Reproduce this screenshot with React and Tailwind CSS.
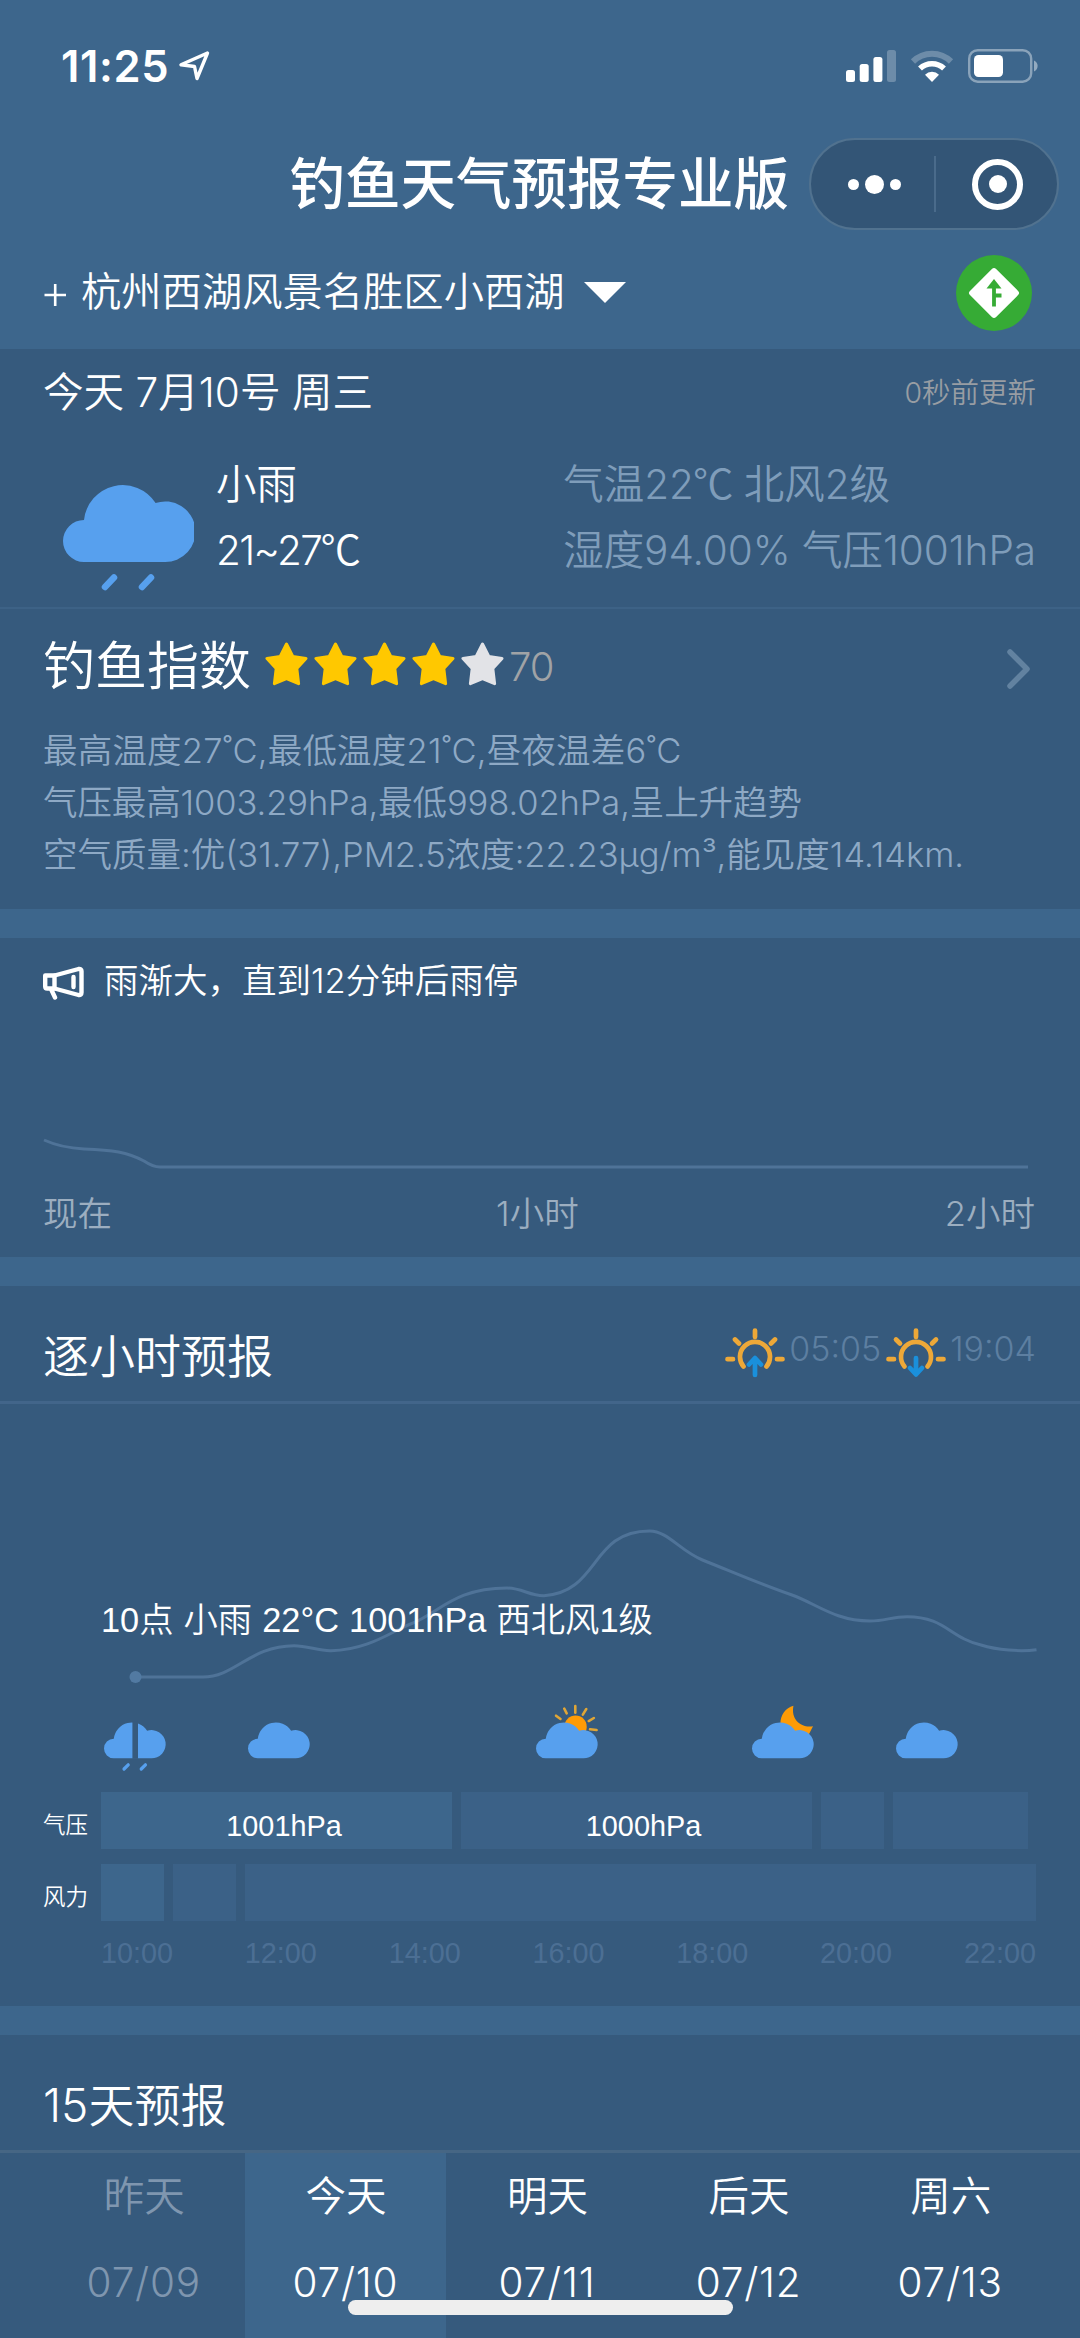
import React from 'react';

const days = [
  { name: '昨天', date: '07/09', past: true },
  { name: '今天', date: '07/10', active: true },
  { name: '明天', date: '07/11' },
  { name: '后天', date: '07/12' },
  { name: '周六', date: '07/13' },
];

const hours = ['10:00', '12:00', '14:00', '16:00', '18:00', '20:00', '22:00'];

const CLOUD = 'M21 78A21 21 0 0 1 21 36A39 39 0 0 1 92.6 19A30.3 30.3 0 1 1 101 78Z';

const StatusBar = () => (
  <div className="h-[132px] flex items-center pl-[61px] pr-[42px]">
    <span className="text-[43.5px] leading-none font-semibold tracking-[0.6px] mt-[1px]">11:25</span>
    <svg className="ml-[9px] w-[32px] h-[30px]" viewBox="0 0 32 30" fill="none" stroke="#fff" strokeWidth="3.4" strokeLinejoin="round">
      <path d="M29.500 2L3 13.800L16.500 15.500L19 27.500Z" />
    </svg>
    <div className="ml-auto flex items-center gap-[14px]">
      <svg width="50" height="32" viewBox="0 0 50 32" fill="#fff">
        <rect x="0" y="20" width="9" height="12" rx="2.500" />
        <rect x="13.700" y="14" width="9" height="18" rx="2.500" />
        <rect x="27.400" y="7" width="9" height="25" rx="2.500" />
        <rect x="41" y="0" width="9" height="32" rx="2.500" opacity="0.25" />
      </svg>
      <svg width="44" height="32" viewBox="0 0 44 32" fill="none" stroke="#fff">
        <path d="M3 11.500A27 27 0 0 1 41 11.500" strokeWidth="6" opacity="0.25" />
        <path d="M10 18.500A17.500 17.500 0 0 1 34 18.500" strokeWidth="5.600" />
        <path d="M22 32L15 24.700A10 10 0 0 1 29 24.700Z" fill="#fff" stroke="none" />
      </svg>
      <svg width="70" height="34" viewBox="0 0 70 34">
        <rect x="1.200" y="1.200" width="62" height="31.500" rx="8.500" fill="none" stroke="#fff" strokeWidth="2.400" opacity="0.4" />
        <rect x="6" y="6" width="29" height="22" rx="4.500" fill="#fff" />
        <path d="M66 11.500A6 6 0 0 1 66 22.500Z" fill="#fff" opacity="0.45" />
      </svg>
    </div>
  </div>
);

const TitleBar = () => (
  <div className="h-[104px] flex items-center justify-end pr-[21px]">
    <h1 className="text-[55.5px] leading-none font-medium mr-[20px] whitespace-nowrap">钓鱼天气预报专业版</h1>
    <div className="w-[250px] h-[92px] rounded-full bg-[#335576] border-2 border-[#51728f] flex items-center">
      <div className="flex-1 flex items-center justify-center gap-[6px] pl-[4px]">
        <i className="size-[11px] rounded-full bg-white" />
        <i className="size-[19px] rounded-full bg-white" />
        <i className="size-[11px] rounded-full bg-white" />
      </div>
      <div className="w-[2px] h-[56px] bg-[#4a6b8b]" />
      <div className="flex-1 flex items-center justify-center pl-[2px]">
        <div className="size-[51px] rounded-full border-[6px] border-white flex items-center justify-center">
          <i className="size-[18px] rounded-full bg-white" />
        </div>
      </div>
    </div>
  </div>
);

const CityBar = () => (
  <div className="h-[113px] flex items-center pl-[44px] pr-[48px]">
    <svg className="mt-[5px]" width="23" height="22" viewBox="0 0 23 22" stroke="#fff" strokeWidth="2.600">
      <path d="M0.500 11H22M11.200 0V22" />
    </svg>
    <span className="ml-[14px] text-[40.3px] leading-none">杭州西湖风景名胜区小西湖</span>
    <svg className="ml-[19px]" width="42" height="21" viewBox="0 0 42 21" fill="#fff">
      <path d="M0 0H42L21 21Z" />
    </svg>
    <svg className="ml-auto" width="76" height="76" viewBox="0 0 76 76">
      <circle cx="38" cy="38" r="38" fill="#36ab35" />
      <rect x="19.500" y="19.500" width="37" height="37" rx="3" fill="#fff" transform="rotate(45 38 38)" />
      <path d="M38 51.500V31M38 40.500H45.500" fill="none" stroke="#36ab35" strokeWidth="3.800" />
      <path d="M38 24L45.500 33.500H30.500Z" fill="#36ab35" />
    </svg>
  </div>
);

const Star = ({ color }) => (
  <svg width="43" height="44" viewBox="0 0 43 44">
    <path
      d="M21.500 2L27.800 14.500L41 16.400L31.800 26.500L33.600 41.700L21.500 36.500L9.400 41.700L11.200 26.500L2 16.400L15.200 14.500Z"
      fill={color}
      stroke={color}
      strokeWidth="3"
      strokeLinejoin="round"
    />
  </svg>
);

// full-width celsius sign, taken from the CJK face
const Celsius = () => <span className="font-['Noto_Sans_CJK_SC',sans-serif] leading-none -ml-[1px] -mr-[1px]">℃</span>;

const Today = () => (
  <section className="bg-[#365a7d]">
    <div className="h-[260px] pl-[43px] pr-[44px] border-b-2 border-[#3d6286]">
      <div className="h-[86px] flex items-center justify-between pt-[2px]">
        <span className="text-[40.6px] leading-none">今天 7月10号 周三</span>
        <span className="text-[28.5px] leading-none text-[#989da3]">0秒前更新</span>
      </div>
      <div className="flex pt-[17px] leading-[66px] text-[40.5px]">
        <svg className="ml-[20px] mt-[32px]" width="131" height="107" viewBox="0 0 131 107">
          <path d={CLOUD} fill="#57a0ee" />
          <path d="M51 93.500L42 103M88 93.500L79 103" stroke="#57a0ee" strokeWidth="6.500" strokeLinecap="round" />
        </svg>
        <div className="ml-[22px]">
          <p>小雨</p>
          <p className="tracking-[-1.6px]">21~27<Celsius /></p>
        </div>
        <div className="ml-auto text-[#7f9dba] whitespace-nowrap">
          <p>气温22<Celsius /> 北风2级</p>
          <p className="tracking-[-0.05px]">湿度94.00% 气压1001hPa</p>
        </div>
      </div>
    </div>
    <div className="h-[300px] pl-[43px] pr-[44px]">
      <div className="h-[116px] flex items-center">
        <h2 className="text-[52px] leading-none">钓鱼指数</h2>
        <div className="flex gap-[6px] ml-[14px] mb-[7px]">
          <Star color="#ffc800" />
          <Star color="#ffc800" />
          <Star color="#ffc800" />
          <Star color="#ffc800" />
          <Star color="#e2e3e7" />
        </div>
        <span className="text-[40px] leading-none text-[#a0a3a6] ml-[5px] tracking-[-1px]">70</span>
        <svg className="ml-auto mr-[5px] mt-[3px]" width="25" height="42" viewBox="0 0 25 42" fill="none" stroke="#6282a0" strokeWidth="5.500" strokeLinecap="round" strokeLinejoin="round">
          <path d="M4 4L21 21L4 38" />
        </svg>
      </div>
      <div className="text-[34.5px] leading-[51.8px] text-[#8ea9c5] whitespace-nowrap">
        <p className="tracking-[0.2px]">最高温度27˚C,最低温度21˚C,昼夜温差6˚C</p>
        <p className="tracking-[-0.1px]">气压最高1003.29hPa,最低998.02hPa,呈上升趋势</p>
        <p>空气质量:优(31.77),PM2.5浓度:22.23μg/m³,能见度14.14km.</p>
      </div>
    </div>
  </section>
);

const RainTrend = () => (
  <section className="h-[319px] mt-[29px] bg-[#365a7d] pl-[43px] pr-[45px] flex flex-col">
    <div className="h-[86px] flex items-center">
      <svg className="mt-[4px]" width="42" height="34" viewBox="0 0 42 34" fill="none" stroke="#fff" strokeWidth="4.400" strokeLinejoin="round" strokeLinecap="round">
        <path d="M2.200 9.500H11.500V22.500H4.200Q2.200 22.500 2.200 20.500Z" />
        <path d="M11.500 9.500L35.500 3Q38.500 2.500 38.500 5V26.500Q38.500 29.500 35.500 29L11.500 22.500" />
        <path d="M30.500 11V21M8.500 24L12 31.500" />
      </svg>
      <span className="ml-[19px] text-[34.5px] leading-none">雨渐大，直到12分钟后雨停</span>
    </div>
    <svg className="mt-[106px]" width="992" height="46" viewBox="0 0 992 46" fill="none" stroke="#4f7398" strokeWidth="3">
      <path d="M1 10C12 15 22 18 41 19C70 20 84 22 101 31C107 35 111 37 117 37H985" />
    </svg>
    <div className="flex justify-between text-[34.5px] leading-[76px] text-[#9caec0]">
      <span>现在</span>
      <span className="ml-[18px]">1小时</span>
      <span>2小时</span>
    </div>
  </section>
);

const SunIcon = ({ down }) => (
  <svg width="60" height="50" viewBox="0 0 60 50" fill="none" strokeLinecap="round" strokeLinejoin="round" strokeWidth="4.700">
    <path d="M18.500 38.500A15 15 0 1 1 41.500 38.500M30 2.500V9M10 11.500L14 15.500M50 11.500L46 15.500M2.500 31.200H8M52 31.200H57.500" stroke="#eda838" />
    {down ? (
      <path d="M30 30V46M24 40L30 46.500L36 40" stroke="#1a90dc" />
    ) : (
      <path d="M30 47V30.500M24 36.500L30 30L36 36.500" stroke="#1a90dc" />
    )}
  </svg>
);

const HourIcon = ({ type }) => (
  <svg className="overflow-visible shrink-0" width="61" height="50" viewBox="0 0 131 107.400">
    {type === 'sun' && (
      <g>
        <circle cx="85" cy="10" r="24" fill="#fe9b06" />
        <path
          d="M43 -13.600L52.600 -6.400M60.700 -28.600L65.900 -18.600M84.400 -34.300V-20M108 -27.900L100.600 -15.700M124.300 -8.600L113.200 -2.100M130.200 17.200L116 15.700"
          stroke="#e0a636"
          strokeWidth="5.500"
          strokeLinecap="round"
        />
      </g>
    )}
    {type === 'moon' && <path d="M89 -35C72 -30 61 -16 61 4L95 30L122 27L131 9C106 13 83 -4 89 -35Z" fill="#fe9b06" />}
    <path d={CLOUD} fill="#57a0ee" />
    {type === 'rain' && <path d="M52 92L43 101M89 92L80 101" stroke="#57a0ee" strokeWidth="7" strokeLinecap="round" />}
    {type === 'rain' && <path d="M61 -2H73V79H61Z" fill="#365a7d" />}
  </svg>
);

const Hourly = () => (
  <section className="h-[720px] mt-[29px] bg-[#365a7d]">
    <div className="h-[118px] pl-[43px] pr-[44px] pt-[20px] flex items-center justify-between border-b-[3px] border-[#42658a]">
      <h2 className="text-[46px] leading-none mt-[4px]">逐小时预报</h2>
      <div className="flex items-center text-[34px] leading-none text-[#5d7fa1] -mt-[10px]">
        <span className="mt-[8px]"><SunIcon /></span>
        <span className="ml-[4px]">05:05</span>
        <span className="mt-[8px] ml-[5px]"><SunIcon down /></span>
        <span className="ml-[4px]">19:04</span>
      </div>
    </div>

    {/* temperature curve with the label of the selected hour on top */}
    <div className="relative h-[302px]">
      <svg className="block" width="1080" height="302" viewBox="0 1404 1080 302" fill="none">
        <path
          d="M135 1677H203C235 1677 250 1646 294 1645.700C308 1645.700 318 1651 331 1650.700C370 1650 395 1629 413 1623C440 1612 455 1588 507 1588C522 1588 530 1596 544 1595.700C600 1592 590 1531 649.500 1531C668 1531 680 1551 702.500 1560C735 1573 765 1586 792 1595C815 1603 835 1621 870 1621C885 1621 892 1616.700 907 1616.700C945 1616.700 950 1638 981 1645C997 1650 1020 1652 1036.500 1649.700"
          stroke="#4f7398"
          strokeWidth="3"
        />
        <circle cx="135.500" cy="1677" r="6" fill="#527aa2" />
      </svg>
      <p className="absolute left-[101px] top-[196px] leading-[40px] text-[34.3px] [word-spacing:0.6px] font-['Liberation_Sans','Noto_Sans_CJK_SC',sans-serif] whitespace-nowrap">
        10点 小雨 22°C 1001hPa 西北风1级
      </p>
    </div>

    <div className="flex pl-[104px] pt-[16px]">
      <HourIcon type="rain" />
      <span className="ml-[83px]"><HourIcon /></span>
      <span className="ml-[227px]"><HourIcon type="sun" /></span>
      <span className="ml-[155px]"><HourIcon type="moon" /></span>
      <span className="ml-[83px]"><HourIcon /></span>
    </div>

    <div className="mt-[20px] pl-[43px] flex flex-col gap-[15px] font-['Liberation_Sans','Noto_Sans_CJK_SC',sans-serif]">
      <div className="flex h-[57px] gap-[9px]">
        <span className="w-[49px] text-[22.5px] leading-[68px]">气压</span>
        <div className="w-[351px] bg-[#3d668c] text-center text-[28.8px] leading-[68px] pl-[15px]">1001hPa</div>
        <div className="w-[351px] bg-[#3b6187] text-center text-[28.8px] leading-[68px] pl-[14px]">1000hPa</div>
        <div className="w-[63px] bg-[#3b6187]" />
        <div className="w-[135px] bg-[#3b6187]" />
      </div>
      <div className="flex h-[57px] gap-[9px]">
        <span className="w-[49px] text-[22.5px] leading-[68px]">风力</span>
        <div className="w-[63px] bg-[#3d668c]" />
        <div className="w-[63px] bg-[#3b6187]" />
        <div className="w-[791px] bg-[#3b6187]" />
      </div>
    </div>

    <div className="mt-[12px] pl-[101px] pr-[44px] flex justify-between text-[28.8px] leading-[40px] text-[#4c6f94] font-['Liberation_Sans',sans-serif]">
      {hours.map((h) => (
        <span key={h}>{h}</span>
      ))}
    </div>
  </section>
);

const Forecast = () => (
  <section className="h-[303px] mt-[29px] bg-[#365a7d] overflow-hidden">
    <div className="h-[118px] pl-[43px] pt-[24px] flex items-center border-b-[3px] border-[#466684]">
      <h2 className="text-[46px] leading-none">15天预报</h2>
    </div>
    <div className="flex pl-[43px]">
      {days.map((d) => (
        <div
          key={d.date}
          className={`w-[201.6px] shrink-0 h-[185px] pt-[1px] text-center text-[40.5px] leading-[86px] ${d.active ? 'bg-[#3d668c]' : ''} ${d.past ? 'text-[#7f96af]' : ''}`}
        >
          <p className="pl-[1px]">{d.name}</p>
          <p className="tracking-[0.8px]">{d.date}</p>
        </div>
      ))}
    </div>
  </section>
);

export default function App() {
  return (
    <div className="relative w-[1080px] h-[2338px] overflow-hidden bg-[#3d668c] text-white font-[350] font-['Inter','Noto_Sans_CJK_SC',sans-serif]">
      <StatusBar />
      <TitleBar />
      <CityBar />
      <Today />
      <RainTrend />
      <Hourly />
      <Forecast />
      <div className="absolute left-[348px] bottom-[23px] w-[385px] h-[15px] rounded-full bg-[#eeeeee]" />
    </div>
  );
}
